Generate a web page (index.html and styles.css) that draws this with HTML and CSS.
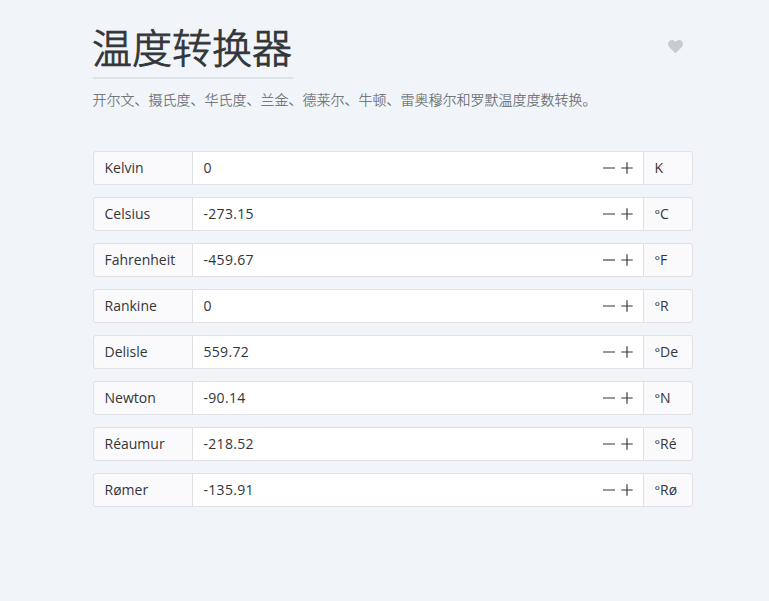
FILE: index.html
```html
<!DOCTYPE html>
<html lang="zh-CN">
<head>
<meta charset="utf-8">
<title>温度转换器</title>
<link rel="stylesheet" href="styles.css">
</head>
<body>
<main class="tool">
  <header class="header">
    <div class="title-row">
      <h1 class="title">温度转换器</h1>
      <svg class="heart" viewBox="0 0 512 512"><path d="M462.3 62.6C407.5 15.9 326 24.3 275.7 76.2L256 96.5l-19.7-20.3C186.1 24.3 104.5 15.9 49.7 62.6c-62.8 53.6-66.1 149.8-9.9 207.9l193.5 199.8c12.5 12.9 32.8 12.9 45.3 0l193.5-199.8c56.3-58.1 53-154.3-9.8-207.9z"/></svg>
    </div>
    <div class="separator"></div>
    <p class="description">开尔文、摄氏度、华氏度、兰金、德莱尔、牛顿、雷奥穆尔和罗默温度度数转换。</p>
  </header>
  <div class="rows" id="rows"></div>
</main>
<script src="app.js"></script>
</body>
</html>
```
FILE: styles.css
```css
* { box-sizing: border-box; }
body {
  margin: 0;
  background: #f1f5f9;
  color: #333639;
  font-family: "Open Sans", "Noto Sans CJK SC", sans-serif;
  font-size: 14px;
}
.tool { width: 600px; margin: 0 0 0 93px; padding-top: 20px; }
.header { height: 131px; }
.title-row { display: flex; justify-content: space-between; height: 57px; padding-right: 10px; }
.title { margin: 0 0 0 -1px; font-size: 40px; font-weight: 300; line-height: 56px; white-space: nowrap; -webkit-text-stroke: 0.9px #333639; }
.heart { width: 15px; height: 15px; margin-top: 19px; fill: #c9cccf; }
.separator { width: 200px; height: 2px; background: #dfe3e6; }
.description { margin: 10px 0 0 -0.5px; font-size: 14px; font-weight: 300; line-height: 21px; color: #66696c; white-space: nowrap; -webkit-text-stroke: 0.15px #66696c; }
.rows { display: flex; flex-direction: column; gap: 12px; }
.row {
  display: grid;
  grid-template-columns: 98px 452px 1fr;
  height: 34px;
  border: 1px solid #e0e0e6;
  border-radius: 3px;
  background: #fafafc;
  line-height: 32px;
  overflow: hidden;
  white-space: nowrap;
}
.label, .unit { padding-left: 10.5px; }
.field { display: flex; justify-content: space-between; padding: 0 9px 0 10.5px; background: #fff; border: solid #e0e0e6; border-width: 0 1px; }
.value { letter-spacing: 0.3px; }
.degree { display: inline-block; width: 5.5px; font-size: 13px; }
.buttons { display: flex; align-items: center; gap: 4px; }
.icon { width: 14px; height: 14px; stroke: #333639; stroke-width: 1.15; fill: none; }
```
FILE: app.js
```js
const scales = [
  ["Kelvin", "0", "K"],
  ["Celsius", "-273.15", "°C"],
  ["Fahrenheit", "-459.67", "°F"],
  ["Rankine", "0", "°R"],
  ["Delisle", "559.72", "°De"],
  ["Newton", "-90.14", "°N"],
  ["Réaumur", "-218.52", "°Ré"],
  ["Rømer", "-135.91", "°Rø"],
];
document.getElementById("rows").innerHTML = scales.map(([name, value, unit]) => `
  <div class="row">
    <span class="label">${name}</span>
    <div class="field">
      <span class="value">${value}</span>
      <span class="buttons">
        <svg class="icon" viewBox="0 0 14 14"><path d="M1 7H13"/></svg>
        <svg class="icon" viewBox="0 0 14 14"><path d="M1.3 7H12.7M7 1.3V12.7"/></svg>
      </span>
    </div>
    <span class="unit">${unit.replace("°", '<span class="degree">°</span>')}</span>
  </div>`).join("");
```
